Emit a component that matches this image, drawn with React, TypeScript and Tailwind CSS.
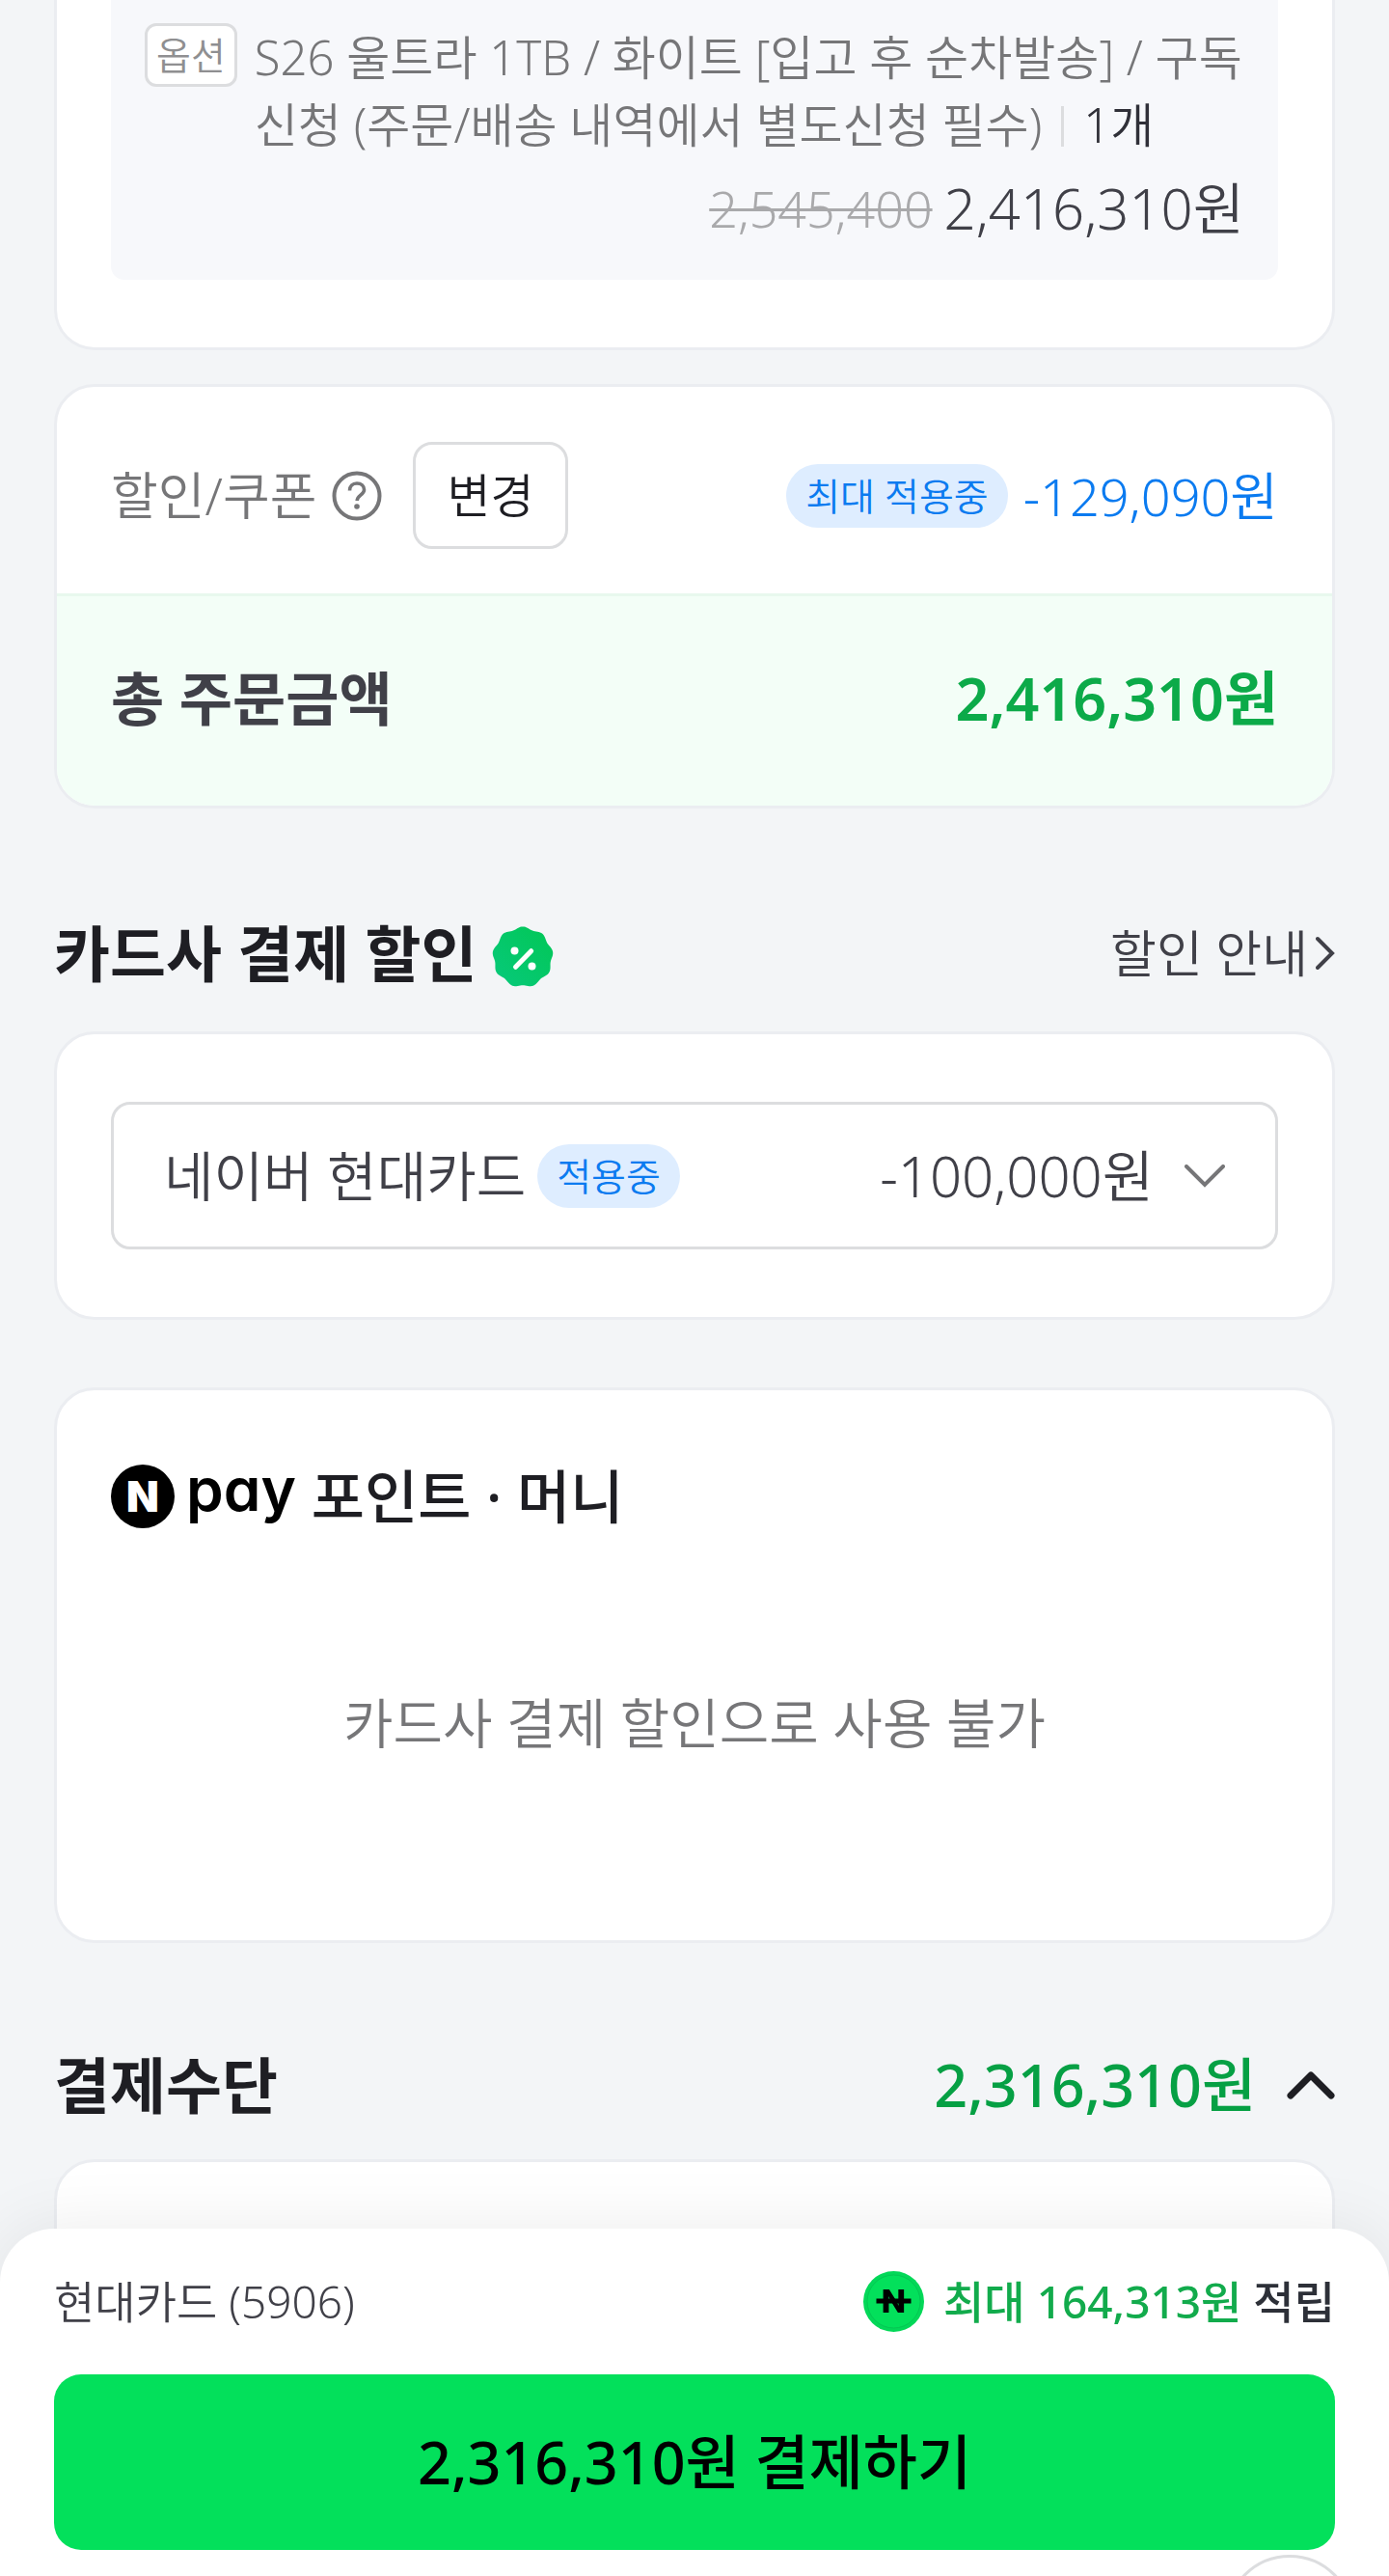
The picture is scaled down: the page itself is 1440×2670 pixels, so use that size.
import React, { useState } from "react";

const CARD = "border-[3px] border-[#ebedf1] bg-white rounded-[42px]";

function HelpIcon() {
  return (
    <svg className="size-[52px]" viewBox="0 0 52 52" fill="none" stroke="#767678" aria-hidden="true">
      <circle cx="26" cy="26" r="23.5" strokeWidth="4" />
      <path d="M18.5 20.5c0-4.600 3-7.500 7.500-7.500s7.500 2.800 7.500 6.600c0 5.400-7.300 5.800-7.300 11.400" strokeWidth="3.600" />
      <circle cx="26" cy="37" r="2.800" fill="#767678" stroke="none" />
    </svg>
  );
}

// wavy round badge, nine bumps
function badgePath() {
  const points: string[] = [];
  for (let i = 0; i < 144; i++) {
    const a = (i / 144) * Math.PI * 2;
    const r = 30.4 + 1.2 * Math.cos(9 * a);
    points.push(`${(32 + r * Math.sin(a)).toFixed(2)} ${(32 - r * Math.cos(a)).toFixed(2)}`);
  }
  return `M${points.join("L")}Z`;
}

function PercentBadge() {
  return (
    <svg className="size-16" viewBox="0 0 64 64" aria-hidden="true">
      <defs>
        <linearGradient id="badge" x1="1" y1="0" x2="0" y2="1">
          <stop offset="0" stopColor="#02c755" />
          <stop offset="1" stopColor="#07c97c" />
        </linearGradient>
      </defs>
      <path d={badgePath()} fill="url(#badge)" />
      <path d="M24.500 42.300L40.700 25.700" stroke="#fff" strokeWidth="5" strokeLinecap="round" />
      <circle cx="23.500" cy="25.500" r="4" fill="#fff" />
      <circle cx="41.500" cy="41.500" r="4" fill="#fff" />
    </svg>
  );
}

function NpayLogo() {
  return (
    <span className="flex items-center gap-3 font-['Inter',sans-serif] text-black">
      <span className="flex size-[66px] items-center justify-center rounded-full bg-black text-[44px] leading-none font-black text-white">
        N
      </span>
      <span className="self-start text-[62px] leading-[52px] font-semibold [font-feature-settings:'cv11']">pay</span>
    </span>
  );
}

function CoinIcon() {
  return (
    <svg className="size-[63px]" viewBox="0 0 63 63" aria-hidden="true">
      <circle cx="31.500" cy="31.500" r="31.500" fill="#03d858" />
      <circle cx="31.500" cy="31.500" r="27.500" fill="#03e05b" stroke="#05c653" strokeWidth="1" />
      <rect x="13.500" y="28.500" width="36" height="5" fill="#000" />
      <text x="31.500" y="43" textAnchor="middle" fontSize="33" fontWeight="800" fontFamily="Inter, sans-serif">
        N
      </text>
    </svg>
  );
}

function Pill({ children }: { children: React.ReactNode }) {
  return (
    <span className="rounded-full bg-[#deedff] px-5 text-[39px] leading-[66px] font-[350] text-[#0b7bf0]">
      {children}
    </span>
  );
}

export default function App() {
  const [isOpen, setIsOpen] = useState(true);

  return (
    <div className="min-h-screen bg-[#f3f5f7] font-['Noto_Sans','Noto_Sans_CJK_KR',sans-serif] font-[350] text-[#1e1e23]">
      <main className="px-14">
        <section className="rounded-b-[42px] border-x-[3px] border-b-[3px] border-[#ebedf1] bg-white px-14 pb-[70px]">
          <div className="rounded-b-[14px] bg-[#f7f8fb] px-[35px] pt-6 pb-8">
            <div className="flex items-start gap-[18px]">
              <span className="shrink-0 rounded-xl border-[3px] border-[#dcdddf] bg-white px-[9px] text-[39px] leading-[60px] text-[#8f8f91]">
                옵션
              </span>
              <p className="text-[49px] leading-[70px] text-[#767678]">
                S26 울트라 1TB / 화이트 [입고 후 순차발송] / 구독신청 (주문/배송 내역에서 별도신청 필수)
                <span className="mx-5 inline-block h-[42px] w-[3px] bg-[#dcdddf] align-[-4px]" />
                <span className="text-[#303038]">1개</span>
              </p>
            </div>
            <p className="mt-[10px] flex items-center justify-end gap-3 leading-[84px]">
              <del className="text-[52px] text-[#a9a9ab] decoration-[3px]">2,545,400</del>
              <span className="text-[58px] text-[#404048]">2,416,310원</span>
            </p>
          </div>
        </section>

        <section className={`${CARD} mt-[35px] overflow-hidden`}>
          <div className="flex items-center px-14 pt-[57px] pb-[46px]">
            <h3 className="text-[53px] leading-[70px] text-[#767678]">할인/쿠폰</h3>
            <button type="button" aria-label="할인/쿠폰 도움말" className="ml-4">
              <HelpIcon />
            </button>
            <button
              type="button"
              className="ml-8 rounded-[20px] border-[3px] border-[#dcdddf] bg-white px-8 text-[49px] leading-[105px]"
            >
              변경
            </button>
            <div className="ml-auto flex items-center gap-4">
              <Pill>최대 적용중</Pill>
              <span className="text-[54px] leading-[70px] text-[#0b7bf0]">-129,090원</span>
            </div>
          </div>
          <div className="flex items-center justify-between border-t-[3px] border-[#e8f8ee] bg-[#f3fef7] px-14 pt-16 pb-[69px] text-[60px] leading-[84px]">
            <h3 className="font-bold text-[#404048]">총 주문금액</h3>
            <strong className="text-[61px] font-semibold text-[#0caa49]">2,416,310원</strong>
          </div>
        </section>

        <div className="flex items-center pt-[108px] pb-[39px]">
          <h2 className="text-[63px] leading-[84px] font-bold">카드사 결제 할인</h2>
          <span className="mt-2 ml-4">
            <PercentBadge />
          </span>
          <a href="#guide" className="ml-auto flex items-center gap-2 text-[52px] leading-[70px] text-[#404048]">
            할인 안내
            <svg className="h-9 w-5" viewBox="0 0 20 36" fill="none" stroke="currentColor" strokeWidth="4" aria-hidden="true">
              <path d="M2 3L17 18L2 33" strokeLinecap="round" />
            </svg>
          </a>
        </div>

        <section className={`${CARD} px-14 py-[70px]`}>
          <button
            type="button"
            aria-haspopup="listbox"
            className="flex w-full items-center rounded-[20px] border-[3px] border-[#dcdddf] px-[52px] text-[56px] leading-[147px] text-[#404048]"
          >
            <span className="mr-3">네이버 현대카드</span>
            <Pill>적용중</Pill>
            <span className="ml-auto text-[58px]">-100,000원</span>
            <svg className="ml-8 h-6 w-[42px]" viewBox="0 0 42 24" fill="none" stroke="#767678" strokeWidth="4" aria-hidden="true">
              <path d="M2 2L21 21L40 2" strokeLinecap="round" />
            </svg>
          </button>
        </section>

        <section className={`${CARD} mt-[70px] px-14 pt-[68px] pb-[184px]`}>
          <h2 className="flex items-center gap-4 text-[60px] leading-[84px] font-medium">
            <NpayLogo />
            포인트 · 머니
          </h2>
          <p className="mt-[150px] text-center text-[56px] leading-[84px] text-[#767678]">
            카드사 결제 할인으로 사용 불가
          </p>
        </section>

        <div className="flex items-center pt-[105px] pb-[35px] text-[61px] leading-[84px]">
          <h2 className="text-[63px] font-bold">결제수단</h2>
          <strong className="ml-auto font-medium text-[#06a044]">2,316,310원</strong>
          <button type="button" aria-label="결제수단 접기" aria-expanded={isOpen} onClick={() => setIsOpen(!isOpen)} className="ml-8">
            <svg className="h-[30px] w-[50px]" viewBox="0 0 50 30" fill="none" stroke="currentColor" strokeWidth="7" aria-hidden="true">
              <path d="M4 26L25 5L46 26" strokeLinecap="round" strokeLinejoin="round" />
            </svg>
          </button>
        </div>

        {isOpen && <section className={`${CARD} h-96 rounded-b-none`} />}
      </main>

      <footer className="fixed inset-x-0 bottom-0 overflow-hidden rounded-t-[56px] bg-white px-14 pt-10 pb-[27px] shadow-[0_0_70px_rgba(0,0,0,0.08)]">
        <div className="flex items-center justify-between text-[46px] leading-[70px]">
          <span className="text-[#404048]">현대카드 (5906)</span>
          <p className="flex items-center gap-5 font-medium">
            <CoinIcon />
            <span className="text-[#2d3038]">
              <span className="text-[#12ab4c]">최대 164,313원</span> 적립
            </span>
          </p>
        </div>
        <button
          type="button"
          className="mt-[41px] w-full rounded-[28px] bg-[#03e05b] text-[61px] leading-[182px] font-medium text-black"
        >
          2,316,310원 결제하기
        </button>
        <button
          type="button"
          aria-label="맨 위로"
          className="absolute right-9 -bottom-28 size-[134px] rounded-full border-[3px] border-[#dcdddf] bg-white"
        />
      </footer>
    </div>
  );
}
